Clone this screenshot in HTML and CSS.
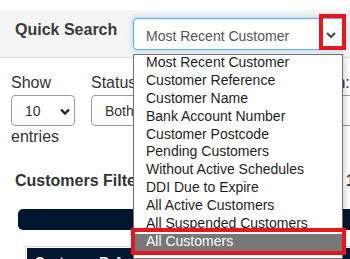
FILE: index.html
```html
<!DOCTYPE html>
<html>
<head>
<meta charset="utf-8">
<link rel="stylesheet" href="styles.css">
</head>
<body>
<div class="page">
  <div class="panel-head">
    <span class="qs-label">Quick Search</span>
    <div class="qs-select">
      <span>Most Recent Customer</span>
      <svg class="chev" width="10" height="6" viewBox="0 0 10 6"><polyline points="1,1 5,5 9,1" fill="none" stroke="#444" stroke-width="2"/></svg>
    </div>
  </div>
  <div class="panel-body">
    <div class="filters">
      <div class="fgroup len">
        <label class="flabel">Show</label>
        <div class="sel sel-10"><span>10</span><svg width="10" height="7" viewBox="0 0 10 7"><polyline points="1,1.5 5,5.5 9,1.5" fill="none" stroke="#222" stroke-width="2.4"/></svg></div>
        <span class="flabel entries">entries</span>
      </div>
      <div class="fgroup status">
        <label class="flabel">Status</label>
        <div class="sel sel-both"><span>Both</span></div>
      </div>
      <div class="fgroup col">
        <label class="flabel">Search Column:</label>
        <div class="sel sel-col"><span>All</span></div>
      </div>
    </div>
    <h3 class="title"><span>Customers Filtered By</span><span class="count">1</span></h3>
    <div class="dark-bar"></div>
    <div class="grid-wrap">
      <table class="grid">
        <thead>
          <tr><th>Customer Ref ▲</th><th>Customer Name ▲</th><th>Postcode ▲</th></tr>
        </thead>
      </table>
    </div>
  </div>

  <ul class="dropdown">
    <li>Most Recent Customer</li>
    <li>Customer Reference</li>
    <li>Customer Name</li>
    <li>Bank Account Number</li>
    <li>Customer Postcode</li>
    <li>Pending Customers</li>
    <li>Without Active Schedules</li>
    <li>DDI Due to Expire</li>
    <li>All Active Customers</li>
    <li>All Suspended Customers</li>
    <li class="selected">All Customers</li>
  </ul>
  <div class="redbox red-chev"></div>
  <div class="redbox red-item"></div>
</div>
</body>
</html>
```

FILE: styles.css
```css
html, body {
  margin: 0;
  padding: 0;
  background: #fff;
  overflow: hidden;
}
body {
  font-family: "Liberation Sans", Arial, sans-serif;
  color: #333;
  width: 350px;
  height: 259px;
}
.page {
  position: relative;
  padding-top: 10px;
  width: 350px;
  height: 249px;
}
.panel-head {
  display: flex;
  align-items: flex-start;
  background: #f5f5f5;
  border-bottom: 1px solid #ddd;
  height: 47px;
  padding: 8px 0 0 15px;
  box-sizing: content-box;
}
.panel-head {
  height: 39px;
}
.qs-label {
  width: 118px;
  flex: none;
  font-weight: bold;
  font-size: 16px;
  line-height: 20px;
  margin-top: 2px;
  color: #3a3a3a;
}
.qs-select {
  width: 212px;
  height: 32px;
  box-sizing: border-box;
  flex: none;
  display: flex;
  align-items: center;
  justify-content: space-between;
  background: #fff;
  border: 1px solid #66afe9;
  border-radius: 4px;
  box-shadow: inset 0 1px 1px rgba(0,0,0,.075), 0 0 6px rgba(102,175,233,.6);
  padding: 3px 8px 0 12px;
  font-size: 14px;
  color: #555;
}
.qs-select .chev {
  margin-top: -2px;
}
.panel-body {
  padding: 15px 0 0 11px;
}
.filters {
  display: flex;
  gap: 16px;
}
.fgroup {
  display: flex;
  flex-direction: column;
  flex: none;
}
.len { width: 64px; }
.status { width: 128px; }
.col { width: 140px; }
.flabel {
  font-size: 16px;
  line-height: 19px;
  color: #333;
}
.sel {
  margin-top: 3px;
  height: 31px;
  box-sizing: border-box;
  border: 1px solid #9a9a9a;
  border-radius: 4px;
  background: #fff;
  display: flex;
  align-items: center;
  justify-content: space-between;
  padding: 1px 4px 0 13px;
  font-size: 14px;
  color: #333;
}
.sel-10 { width: 64px; }
.sel-10 svg { margin-right: 0; }
.sel-both { width: 128px; }
.sel-col { width: 140px; }
.entries {
  margin-top: 1px;
}
.title {
  display: flex;
  margin: 25px 0 0 4px;
  font-size: 16px;
  line-height: 20px;
  font-weight: bold;
  color: #333;
}
.title .count {
  margin-left: auto;
  margin-right: -5px;
}
.dark-bar {
  margin: 18px -30px 0 7px;
  height: 21px;
  background: #02172f;
  border-radius: 5px;
}
.grid-wrap {
  margin: 16px -20px 0 14px;
  border: 1px solid #d6d6d6;
  padding: 1px;
}
.grid {
  width: 100%;
  border-collapse: collapse;
  background: #02172f;
}
.grid th {
  color: #fff;
  font-size: 13px;
  font-weight: bold;
  text-align: left;
  padding: 6px 8px 4px;
  border-right: 1px solid #fff;
  white-space: nowrap;
}

.dropdown {
  position: absolute;
  left: 133px;
  top: 54px;
  width: 210px;
  box-sizing: border-box;
  margin: 0;
  padding: 0 0 6px;
  list-style: none;
  background: #fff;
  border: 1px solid #707070;
  box-shadow: 3px 3px 5px rgba(0,0,0,.14);
}
.dropdown li {
  height: 17.9px;
  line-height: 15px;
  padding-left: 12px;
  font-size: 14px;
  color: #1e1e1e;
  white-space: nowrap;
}
.dropdown li.selected {
  background: #777;
  color: #fff;
}
.redbox {
  position: absolute;
  border: 4px solid #e8151f;
  box-sizing: border-box;
}
.red-chev {
  left: 319px;
  top: 14px;
  width: 27px;
  height: 36px;
}
.red-item {
  left: 131px;
  top: 228px;
  width: 215px;
  height: 27px;
}
```
